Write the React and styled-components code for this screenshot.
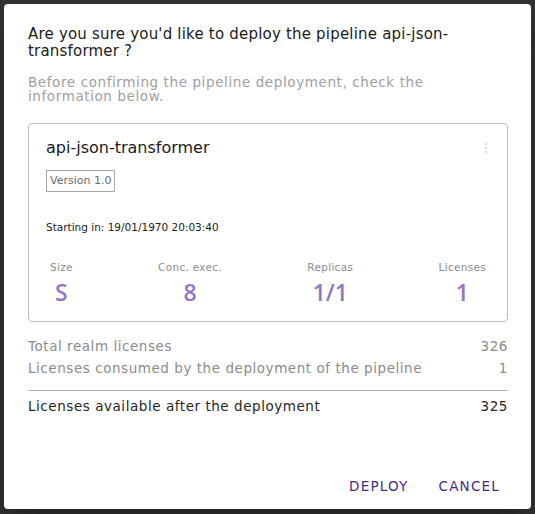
import styled, { createGlobalStyle } from "styled-components";

const GlobalStyle = createGlobalStyle`
  html, body {
    margin: 0;
    padding: 0;
    background: #323232;
  }
  body {
    font-family: "DejaVu Sans", "Liberation Sans", sans-serif;
  }
`;

const PURPLE = "#9575c6";
const DARK_PURPLE = "#4a2a87";

const stats = [
  { label: "Size", value: "S" },
  { label: "Conc. exec.", value: "8" },
  { label: "Replicas", value: "1/1" },
  { label: "Licenses", value: "1" },
];

const totals = [
  { label: "Total realm licenses", value: "326" },
  { label: "Licenses consumed by the deployment of the pipeline", value: "1" },
];

const App = () => {
  return (
    <>
      <GlobalStyle />
      <Backdrop>
        <Dialog role="dialog">
          <Title>Are you sure you'd like to deploy the pipeline api-json-transformer ?</Title>
          <Subtitle>
            Before confirming the pipeline deployment, check the information below.
          </Subtitle>

          <Card>
            <CardHeader>
              <PipelineName>api-json-transformer</PipelineName>
              <Kebab aria-label="More">
                <span />
                <span />
                <span />
              </Kebab>
            </CardHeader>
            <VersionBadge>Version 1.0</VersionBadge>
            <StartDate>Starting in: 19/01/1970 20:03:40</StartDate>
            <Stats>
              {stats.map((s) => (
                <Stat key={s.label}>
                  <StatLabel>{s.label}</StatLabel>
                  <StatValue>{s.value}</StatValue>
                </Stat>
              ))}
            </Stats>
          </Card>

          <Totals>
            {totals.map((t) => (
              <TotalRow key={t.label}>
                <span>{t.label}</span>
                <span>{t.value}</span>
              </TotalRow>
            ))}
            <Divider />
            <TotalRow $strong>
              <span>Licenses available after the deployment</span>
              <span>325</span>
            </TotalRow>
          </Totals>

          <Actions>
            <TextButton>Deploy</TextButton>
            <TextButton>Cancel</TextButton>
          </Actions>
        </Dialog>
      </Backdrop>
    </>
  );
};

const Backdrop = styled.div`
  width: 535px;
  height: 514px;
  padding: 4px;
  box-sizing: border-box;
`;

const Dialog = styled.div`
  display: flex;
  flex-direction: column;
  height: 505px;
  box-sizing: border-box;
  padding: 22px 23px 5px 24px;
  background: #fff;
  border-radius: 4px;
  box-shadow: 0 11px 15px -7px rgba(0, 0, 0, 0.2), 0 24px 38px 3px rgba(0, 0, 0, 0.14);
`;

const Title = styled.h2`
  margin: 0;
  font-size: 15px;
  font-weight: 400;
  line-height: 17px;
  letter-spacing: 0.2px;
  color: #1b1b1b;
`;

const Subtitle = styled.p`
  margin: 15px 0 0;
  font-size: 13.5px;
  line-height: 14px;
  letter-spacing: 0.6px;
  color: #a0a0a0;
`;

const Card = styled.div`
  display: flex;
  flex-direction: column;
  align-items: flex-start;
  margin-top: 20px;
  padding: 14px 17px 15px;
  border: 1px solid #bdbdbd;
  border-radius: 4px;
`;

const CardHeader = styled.div`
  display: flex;
  align-items: center;
  justify-content: space-between;
  align-self: stretch;
`;

const PipelineName = styled.div`
  font-size: 16px;
  line-height: 20px;
  color: #1b1b1b;
`;

const Kebab = styled.div`
  display: flex;
  flex-direction: column;
  align-items: center;
  gap: 2px;
  width: 8px;

  span {
    width: 2px;
    height: 2px;
    background: #dcdcdc;
  }
`;

const VersionBadge = styled.div`
  margin-top: 12px;
  padding: 0 3px;
  height: 22px;
  line-height: 20px;
  box-sizing: border-box;
  border: 1px solid #a8a8a8;
  font-size: 11px;
  color: #6b6b6b;
`;

const StartDate = styled.div`
  margin-top: 28px;
  font-size: 10.5px;
  line-height: 14px;
  color: #222;
`;

const Stats = styled.div`
  display: flex;
  justify-content: space-between;
  align-self: stretch;
  margin-top: 26px;
  padding: 0 4px;
`;

const Stat = styled.div`
  display: flex;
  flex-direction: column;
  align-items: center;
  gap: 4px;
`;

const StatLabel = styled.div`
  font-size: 10.5px;
  line-height: 14px;
  letter-spacing: 0.3px;
  color: #8e8e8e;
`;

const StatValue = styled.div`
  font-family: "Open Sans", "DejaVu Sans", sans-serif;
  font-size: 23px;
  font-weight: 600;
  line-height: 28px;
  color: ${PURPLE};
`;

const Totals = styled.div`
  display: flex;
  flex-direction: column;
  margin-top: 13px;
`;

const TotalRow = styled.div`
  display: flex;
  justify-content: space-between;
  font-size: 13.5px;
  line-height: 22px;
  letter-spacing: 0.55px;
  color: ${(p) => (p.$strong ? "#262626" : "#8c8c8c")};
`;

const Divider = styled.hr`
  margin: 11px 0 4px;
  border: none;
  border-top: 1px solid #b3b3b3;
`;

const Actions = styled.div`
  display: flex;
  justify-content: flex-end;
  gap: 14px;
  margin-top: auto;
`;

const TextButton = styled.button`
  height: 36px;
  padding: 0 8px;
  border: none;
  background: none;
  font-family: inherit;
  font-size: 13.5px;
  letter-spacing: 1.2px;
  text-transform: uppercase;
  color: ${DARK_PURPLE};
  cursor: pointer;
`;

export default App;
